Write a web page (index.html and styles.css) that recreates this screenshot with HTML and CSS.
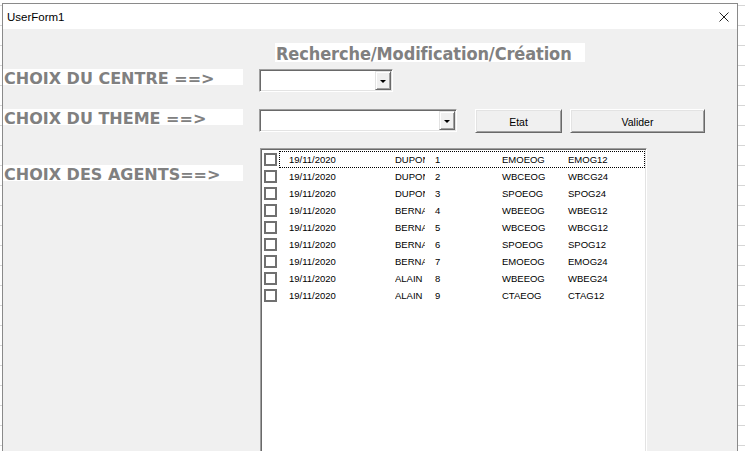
FILE: index.html
```html
<!DOCTYPE html>
<html lang="fr">
<head>
<meta charset="utf-8">
<title>UserForm1</title>
<link rel="stylesheet" href="styles.css">
</head>
<body>
<div class="window">
  <div class="titlebar">
    <span class="title">UserForm1</span>
    <svg class="close" width="10" height="10" viewBox="0 0 10 10"><path d="M0.5 0.5 L9.5 9.5 M9.5 0.5 L0.5 9.5" stroke="#222" stroke-width="1" fill="none"/></svg>
  </div>
  <div class="form">
    <div class="caption-row"><div class="caption">Recherche/Modification/Création</div></div>
    <div class="row row1">
      <div class="label">CHOIX DU CENTRE ==&gt;</div>
      <div class="combo combo-centre"><div class="drop"><span class="tri"></span></div></div>
    </div>
    <div class="row row2">
      <div class="label">CHOIX DU THEME ==&gt;</div>
      <div class="combo combo-theme"><div class="drop"><span class="tri"></span></div></div>
      <div class="btn btn-etat">Etat</div>
      <div class="btn btn-valider">Valider</div>
    </div>
    <div class="row row3">
      <div class="label label-agents">CHOIX DES AGENTS==&gt;</div>
      <div class="listbox">
        <div class="item"><span class="chk"></span><div class="cells focus"><span>19/11/2020</span><span><span class="name">DUPOND</span></span><span>1</span><span>EMOEOG</span><span>EMOG12</span></div></div>
        <div class="item"><span class="chk"></span><div class="cells"><span>19/11/2020</span><span><span class="name">DUPOND</span></span><span>2</span><span>WBCEOG</span><span>WBCG24</span></div></div>
        <div class="item"><span class="chk"></span><div class="cells"><span>19/11/2020</span><span><span class="name">DUPOND</span></span><span>3</span><span>SPOEOG</span><span>SPOG24</span></div></div>
        <div class="item"><span class="chk"></span><div class="cells"><span>19/11/2020</span><span><span class="name">BERNARD</span></span><span>4</span><span>WBEEOG</span><span>WBEG12</span></div></div>
        <div class="item"><span class="chk"></span><div class="cells"><span>19/11/2020</span><span><span class="name">BERNARD</span></span><span>5</span><span>WBCEOG</span><span>WBCG12</span></div></div>
        <div class="item"><span class="chk"></span><div class="cells"><span>19/11/2020</span><span><span class="name">BERNARD</span></span><span>6</span><span>SPOEOG</span><span>SPOG12</span></div></div>
        <div class="item"><span class="chk"></span><div class="cells"><span>19/11/2020</span><span><span class="name">BERNARD</span></span><span>7</span><span>EMOEOG</span><span>EMOG24</span></div></div>
        <div class="item"><span class="chk"></span><div class="cells"><span>19/11/2020</span><span><span class="name">ALAIN</span></span><span>8</span><span>WBEEOG</span><span>WBEG24</span></div></div>
        <div class="item"><span class="chk"></span><div class="cells"><span>19/11/2020</span><span><span class="name">ALAIN</span></span><span>9</span><span>CTAEOG</span><span>CTAG12</span></div></div>
      </div>
    </div>
  </div>
</div>
</body>
</html>
```

FILE: styles.css
```css
* { box-sizing: border-box; }

html, body {
  margin: 0;
  padding: 0;
}

body {
  width: 745px;
  height: 451px;
  overflow: hidden;
  background-color: #ffffff;
  background-image: repeating-linear-gradient(to bottom, transparent 0, transparent 5px, #d6d6d6 5px, #d6d6d6 6px, transparent 6px, transparent 20px);
  font-family: "Liberation Sans", Arial, sans-serif;
}

.window {
  margin: 3px 0 0 2px;
  width: 736px;
  height: 448px;
  border: 1px solid #8a8a8a;
  border-bottom: none;
  background: #f0f0f0;
  display: flex;
  flex-direction: column;
  overflow: hidden;
}

.titlebar {
  height: 25px;
  background: #ffffff;
  display: flex;
  align-items: center;
  justify-content: space-between;
  padding: 0 8px 0 4px;
  flex: none;
}

.title {
  font-family: "Liberation Sans", Arial, sans-serif;
  font-size: 11.5px;
  color: #000;
}

.close {
  display: block;
  margin-top: 1px;
}

.form {
  display: flex;
  flex-direction: column;
  flex: 1;
  min-height: 0;
  overflow: hidden;
}

.caption-row {
  margin-top: 14px;
  padding-left: 272px;
}

.caption {
  width: 310px;
  height: 19px;
  background: #ffffff;
  color: #808080;
  font-family: "DejaVu Sans Condensed", "DejaVu Sans", sans-serif;
  font-weight: bold;
  font-size: 18px;
  letter-spacing: -0.1px;
  line-height: 21px;
  padding-left: 1px;
  white-space: nowrap;
}

.row {
  display: flex;
  align-items: flex-start;
  flex: none;
}

.row1 { margin-top: 7px; }
.row2 { margin-top: 17px; }
.row3 { margin-top: 15px; }

.label {
  width: 240px;
  height: 16px;
  background: #ffffff;
  color: #808080;
  font-family: "DejaVu Sans", sans-serif;
  font-weight: bold;
  font-size: 16px;
  line-height: 19px;
  padding-left: 1px;
  white-space: nowrap;
  flex: none;
}

.label-agents { margin-top: 17px; }

.combo {
  height: 23px;
  background: #ffffff;
  border: 1px solid;
  border-color: #a0a0a0 #ffffff #ffffff #a0a0a0;
  box-shadow: inset 1px 1px 0 #696969, inset -1px -1px 0 #e3e3e3;
  padding: 1px;
  display: flex;
  justify-content: flex-end;
  flex: none;
}

.combo-centre { width: 134px; margin-left: 16px; }
.combo-theme { width: 198px; margin-left: 16px; }

.drop {
  width: 16px;
  height: 19px;
  background: #f0f0f0;
  border: 1px solid;
  border-color: #e3e3e3 #696969 #696969 #e3e3e3;
  box-shadow: inset 1px 1px 0 #ffffff, inset -1px -1px 0 #a0a0a0;
  display: flex;
  align-items: center;
  justify-content: center;
}

.tri {
  width: 0;
  height: 0;
  border-left: 3px solid transparent;
  border-right: 3px solid transparent;
  border-top: 3px solid #000;
  margin-top: 1px;
}

.btn {
  height: 24px;
  background: #f0f0f0;
  border: 1px solid;
  border-color: #ffffff #696969 #696969 #ffffff;
  box-shadow: inset 1px 1px 0 #e3e3e3, inset -1px -1px 0 #a0a0a0;
  font-family: "Liberation Sans", Arial, sans-serif;
  font-size: 10.5px;
  color: #000;
  display: flex;
  align-items: center;
  justify-content: center;
  padding-top: 2px;
  flex: none;
}

.btn-etat { width: 87px; margin-left: 18px; }
.btn-valider { width: 135px; margin-left: 8px; }

.listbox {
  width: 387px;
  height: 310px;
  margin-left: 17px;
  background: #ffffff;
  border: 1px solid;
  border-color: #a0a0a0 #ffffff #ffffff #a0a0a0;
  box-shadow: inset 1px 1px 0 #696969, inset -1px -1px 0 #e3e3e3;
  padding: 2px 1px 0 1px;
  flex: none;
}

.item {
  display: flex;
  height: 17px;
}

.chk {
  width: 13px;
  height: 13px;
  margin: 2px 0 0 2px;
  border: 2px solid #707070;
  background: #fff;
  flex: none;
}

.cells {
  flex: 1;
  margin-left: 2px;
  height: 17px;
  border: 1px solid transparent;
  display: grid;
  grid-template-columns: 106px 40px 67px 66px auto;
  padding-left: 9px;
  font-family: "Liberation Sans", Arial, sans-serif;
  font-size: 9.5px;
  line-height: 15px;
  color: #000;
  white-space: nowrap;
}

.cells.focus {
  border: 1px dotted #000;
}

.name {
  display: inline-block;
  width: 30px;
  overflow: hidden;
  vertical-align: top;
}
```
